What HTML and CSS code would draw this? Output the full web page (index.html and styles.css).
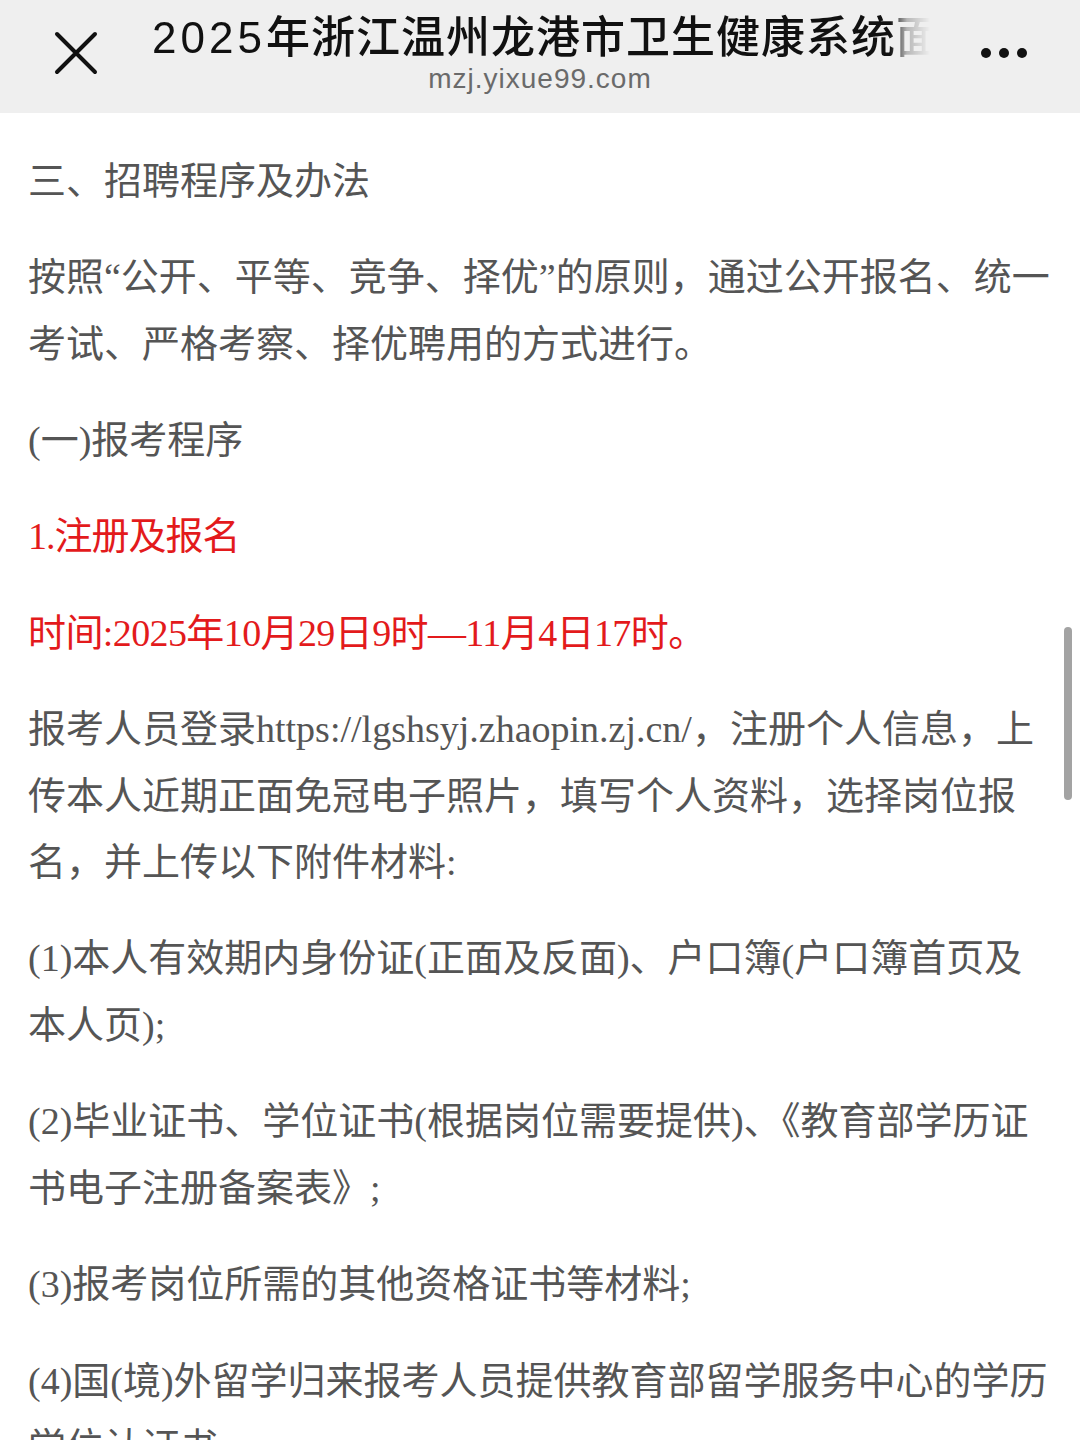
FILE: index.html
```html
<!DOCTYPE html>
<html lang="zh-CN">
<head>
<meta charset="utf-8">
<title>2025年浙江温州龙港市卫生健康系统</title>
<link rel="stylesheet" href="styles.css">
</head>
<body>
<header class="topbar">
  <div class="side">
    <svg class="close" width="44" height="44" viewBox="0 0 44 44" aria-hidden="true">
      <path d="M3 3 L41 41 M41 3 L3 41" stroke="#111" stroke-width="4" stroke-linecap="round" fill="none"/>
    </svg>
  </div>
  <div class="titles">
    <div class="title"><span class="num">2025</span>年浙江温州龙港市卫生健康系统面向社会公开招聘</div>
    <div class="domain">mzj.yixue99.com</div>
  </div>
  <div class="side">
    <div class="more"><span class="dot"></span><span class="dot"></span><span class="dot"></span></div>
  </div>
</header>
<main class="content">
  <p>三、招聘程序及办法</p>
  <p>按照“公开、平等、竞争、择优”的原则，通过公开报名、统一<br>考试、严格考察、择优聘用的方式进行。</p>
  <p>(一)报考程序</p>
  <p class="red">1.注册及报名</p>
  <p class="red time">时间:2025年10月29日9时—11月4日17时。</p>
  <p>报考人员登录https://lgshsyj.zhaopin.zj.cn/，注册个人信息，上<br>传本人近期正面免冠电子照片，填写个人资料，选择岗位报<br>名，并上传以下附件材料:</p>
  <p>(1)本人有效期内身份证(正面及反面)、户口簿(户口簿首页及<br>本人页);</p>
  <p>(2)毕业证书、学位证书(根据岗位需要提供)、《教育部学历证<br>书电子注册备案表》;</p>
  <p>(3)报考岗位所需的其他资格证书等材料;</p>
  <p>(4)国(境)外留学归来报考人员提供教育部留学服务中心的学历<br>学位认证书;</p>
</main>
<div class="scrollbar"></div>
</body>
</html>
```

FILE: styles.css
```css
* { box-sizing: border-box; }
html, body { margin: 0; padding: 0; background: #ffffff; }
body {
  width: 1080px;
  height: 1440px;
  overflow: hidden;
  position: relative;
  font-family: "Liberation Serif", "Noto Sans CJK SC", serif;
}

.topbar {
  height: 113px;
  background: #efefef;
  display: grid;
  grid-template-columns: 152px 776px 152px;
}
.side {
  display: flex;
  align-items: center;
  justify-content: center;
  padding-bottom: 8px;
}
.close { display: block; }
.more { display: flex; gap: 8px; align-items: center; }
.dot {
  width: 10px;
  height: 10px;
  border-radius: 50%;
  background: #111;
}
.titles {
  display: flex;
  flex-direction: column;
  padding-top: 12px;
  min-width: 0;
}
.title {
  width: 785px;
  height: 52px;
  font-family: "Liberation Sans", "Noto Sans CJK SC", sans-serif;
  font-size: 44px;
  line-height: 52px;
  font-weight: 500;
  color: #111;
  letter-spacing: 1px;
  white-space: nowrap;
  overflow: hidden;
  -webkit-mask-image: linear-gradient(to right, #000 738px, rgba(0,0,0,0.25) 755px, transparent 778px);
  mask-image: linear-gradient(to right, #000 738px, rgba(0,0,0,0.25) 755px, transparent 778px);
}
.num { letter-spacing: 4px; }
.domain {
  text-align: center;
  font-family: "Liberation Sans", "Noto Sans CJK SC", sans-serif;
  font-size: 28px;
  line-height: 30px;
  letter-spacing: 1px;
  color: #6a6a6a;
}

.content {
  padding: 35px 30px 0 28px;
  color: #555555;
  font-size: 38px;
  line-height: 66.6px;
}
.content p {
  margin: 0 0 29.7px;
  white-space: nowrap;
}
.content .red { color: #e31a1c; letter-spacing: -1px; }
.content .time { letter-spacing: -0.6px; }

.scrollbar {
  position: absolute;
  left: 1064px;
  top: 627px;
  width: 8px;
  height: 173px;
  border-radius: 4px;
  background: #a3a3a3;
}
```
